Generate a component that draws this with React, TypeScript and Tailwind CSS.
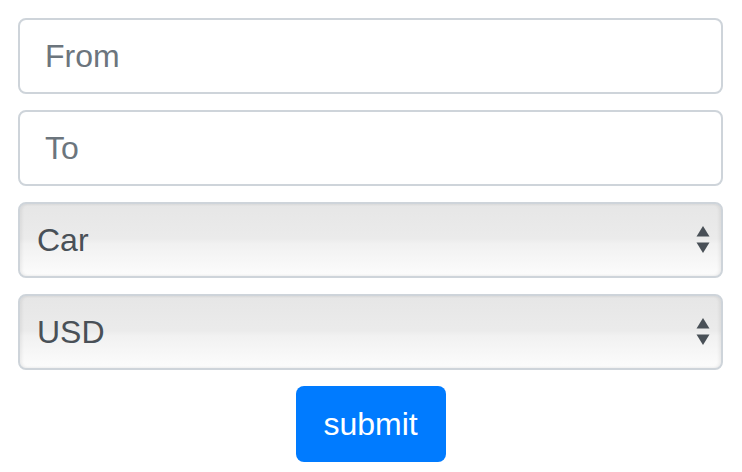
const font = { fontFamily: '"Liberation Sans", Arial, sans-serif' }

function SelectField({ value, options }: { value: string; options: string[] }) {
  return (
    <div className="relative">
      <select
        defaultValue={value}
        className="block h-[76px] w-full appearance-none rounded-[8px] border-2 border-[#ced4da] bg-[linear-gradient(#e6e6e6_0%,#ebebeb_48%,#f1f1f1_55%,#fcfcfc_100%)] pl-[17px] text-[32px] text-[#495057] shadow-[inset_2px_0_3px_rgba(0,0,0,0.06),inset_-2px_0_3px_rgba(0,0,0,0.06)] outline-none"
        style={font}
      >
        {options.map((o) => (
          <option key={o}>{o}</option>
        ))}
      </select>
      {/* стрелки как в нативном select */}
      <svg
        className="pointer-events-none absolute right-[13px] top-[23px]"
        width="14"
        height="29"
        viewBox="0 0 14 29"
      >
        <path d="M7 1 L13.5 11.5 L0.5 11.5 Z" fill="#495057" />
        <path d="M0.5 17.5 L13.5 17.5 L7 28 Z" fill="#495057" />
      </svg>
    </div>
  )
}

export default function App() {
  return (
    <div className="min-h-screen bg-white px-[18px] pt-[18px]" style={font}>
      <form className="flex w-[705px] flex-col gap-[16px]" onSubmit={(e) => e.preventDefault()}>
        <input
          placeholder="From"
          className="block h-[76px] w-full rounded-[8px] border-2 border-[#ced4da] bg-white px-[25px] text-[32px] text-[#495057] outline-none placeholder:text-[#6c757d]"
        />
        <input
          placeholder="To"
          className="block h-[76px] w-full rounded-[8px] border-2 border-[#ced4da] bg-white px-[25px] text-[32px] text-[#495057] outline-none placeholder:text-[#6c757d]"
        />
        <SelectField value="Car" options={['Car', 'Bus', 'Train', 'Plane']} />
        <SelectField value="USD" options={['USD', 'EUR', 'GBP']} />
        <div className="flex justify-center">
          <button
            type="submit"
            className="h-[76px] w-[150px] rounded-[8px] bg-[#007bff] text-[32px] text-white"
          >
            submit
          </button>
        </div>
      </form>
    </div>
  )
}
